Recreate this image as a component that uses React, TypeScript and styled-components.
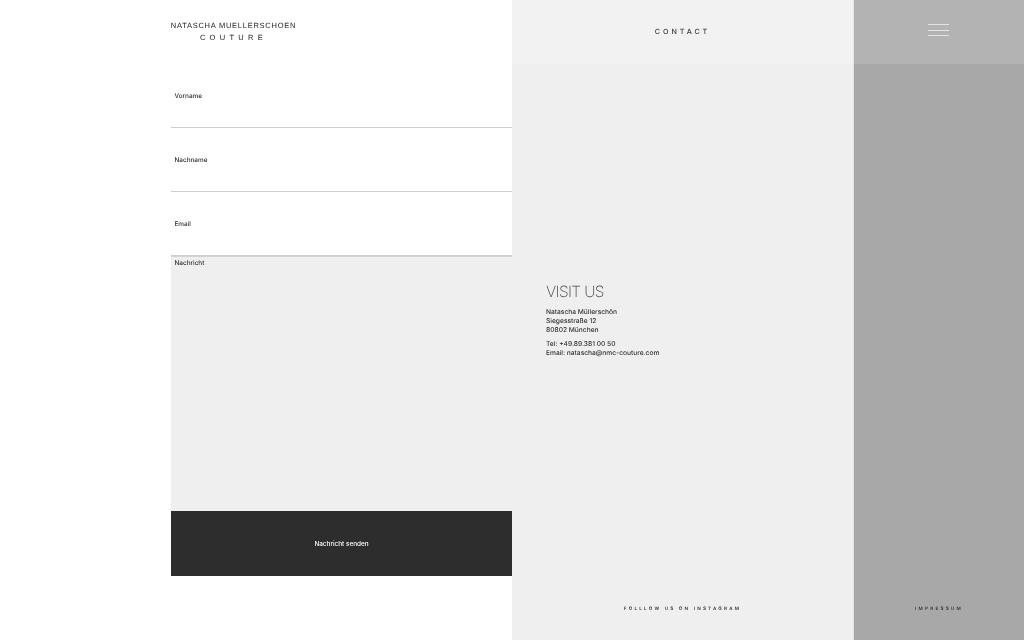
import React from "react";
import styled, { createGlobalStyle } from "styled-components";

const Global = createGlobalStyle`
  html, body { margin: 0; padding: 0; background: #fff; }
  * { box-sizing: border-box; }
  body {
    font-family: "Inter", "Liberation Sans", sans-serif;
    color: #2b2b2a;
    text-rendering: geometricPrecision;
  }
`;

const Page = styled.div`
  display: grid;
  grid-template-columns: 512px 341px 171px;
  width: 1024px;
  height: 640px;
  overflow: hidden;
  filter: grayscale(1);
`;

const LeftColumn = styled.div`
  background: #fff;
  padding-left: 171px;
  display: flex;
  flex-direction: column;
`;

const Logo = styled.div`
  height: 64px;
  display: flex;
  flex-direction: column;
  align-items: center;
  width: 125px;
  padding-top: 21px;
  font-family: "Liberation Sans", Arial, sans-serif;
  color: #222;
`;

const LogoName = styled.div`
  font-size: 7.5px;
  line-height: 9px;
  letter-spacing: 0.75px;
  white-space: nowrap;
`;

const LogoSub = styled.div`
  margin-top: 3px;
  font-size: 7.5px;
  line-height: 9px;
  letter-spacing: 4.3px;
  white-space: nowrap;
`;

const Field = styled.div`
  height: 64px;
  border-bottom: 1px solid #cfcfcf;
  padding: 27.5px 0 0 3.5px;
`;

const Label = styled.label`
  display: block;
  font-size: 6.4px;
  font-weight: 500;
  line-height: 9px;
  color: #2b2b2a;
`;

const MessageBox = styled.div`
  height: 255px;
  background: #efefef;
  border-top: 1px solid #d4d4d4;
  padding: 2px 0 0 3.5px;
`;

const SendButton = styled.button`
  height: 65px;
  width: 341px;
  border: 0;
  background: #2d2d2c;
  color: #fff;
  font-family: "Inter", "Liberation Sans", sans-serif;
  font-size: 6.4px;
  font-weight: 500;
  padding: 0;
`;

const MiddleColumn = styled.div`
  background: #efefef;
  display: flex;
  flex-direction: column;
`;

const MiddleHeader = styled.div`
  height: 64px;
  background: #f2f2f2;
  display: flex;
  align-items: center;
  justify-content: center;
  font-size: 7.2px;
  font-weight: 500;
  letter-spacing: 2.9px;
  color: #3a3a3a;
  padding-bottom: 2px;
`;

const Visit = styled.div`
  padding: 219px 0 0 34px;
  flex: 1;
`;

const VisitTitle = styled.h2`
  margin: 0 0 8px;
  font-weight: 200;
  font-size: 15.5px;
  line-height: 17px;
  letter-spacing: -0.6px;
  color: #444;
`;

const AddressBlock = styled.p`
  margin: 0 0 5px;
  font-size: 6.65px;
  font-weight: 500;
  line-height: 9px;
  color: #333;
`;

const SmallLink = styled.div`
  font-size: 4.6px;
  font-weight: 600;
  line-height: 6px;
  letter-spacing: 2.22px;
  color: #333;
  text-align: center;
  padding-bottom: 27px;
  white-space: nowrap;
`;

const RightColumn = styled.div`
  background: #a8a8a8;
  border-left: 1px solid #e6e6e6;
  display: flex;
  flex-direction: column;
`;

const RightHeader = styled.div`
  height: 64px;
  background: #b3b3b3;
  display: flex;
  justify-content: center;
  padding: 24px 1px 0 0;
`;

const Burger = styled.div`
  width: 21px;
  height: 12px;
  display: flex;
  flex-direction: column;
  justify-content: space-between;
`;

const BurgerLine = styled.span`
  display: block;
  height: 1px;
  background: #e4e4e4;
`;

const RightBody = styled.div`
  flex: 1;
  display: flex;
  flex-direction: column;
  justify-content: flex-end;
`;

export default function App() {
  return (
    <>
      <Global />
      <Page>
        <LeftColumn>
          <Logo>
            <LogoName>NATASCHA MUELLERSCHOEN</LogoName>
            <LogoSub>COUTURE</LogoSub>
          </Logo>
          <Field><Label>Vorname</Label></Field>
          <Field><Label>Nachname</Label></Field>
          <Field><Label>Email</Label></Field>
          <MessageBox><Label>Nachricht</Label></MessageBox>
          <SendButton>Nachricht senden</SendButton>
        </LeftColumn>
        <MiddleColumn>
          <MiddleHeader>CONTACT</MiddleHeader>
          <Visit>
            <VisitTitle>VISIT US</VisitTitle>
            <AddressBlock>Natascha Müllerschön<br />Siegesstraße 12<br />80802 München</AddressBlock>
            <AddressBlock>Tel: +49.89.381 00 50<br />Email: natascha@nmc-couture.com</AddressBlock>
          </Visit>
          <SmallLink>FOLLLOW US ON INSTAGRAM</SmallLink>
        </MiddleColumn>
        <RightColumn>
          <RightHeader>
            <Burger><BurgerLine /><BurgerLine /><BurgerLine /></Burger>
          </RightHeader>
          <RightBody><SmallLink>IMPRESSUM</SmallLink></RightBody>
        </RightColumn>
      </Page>
    </>
  );
}
